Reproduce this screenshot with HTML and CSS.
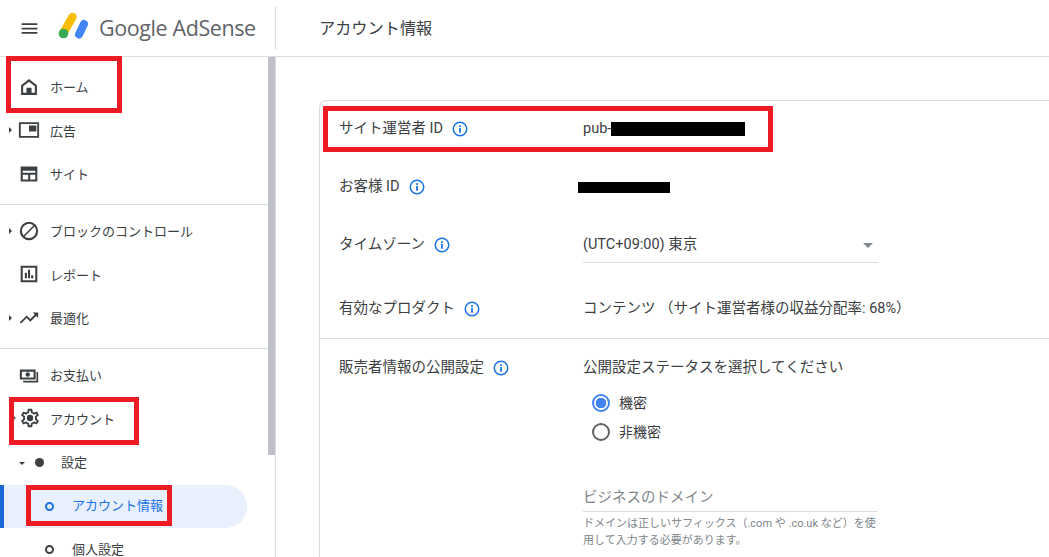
FILE: index.html
```html
<!DOCTYPE html>
<html lang="ja">
<head>
<meta charset="utf-8">
<title>アカウント情報</title>
<link rel="stylesheet" href="styles.css">
</head>
<body>
<header class="topbar">
  <div class="brand">
    <svg class="menu-icon" viewBox="0 0 24 24"><path d="M3 18h18v-2H3v2zm0-5h18v-2H3v2zm0-7v2h18V6H3z"/></svg>
    <svg class="logo" viewBox="0 0 32 28">
      <path d="M14.500 4 L5 20.500" stroke="#fbbc04" stroke-width="8.500" stroke-linecap="round" fill="none"/>
      <path d="M26 11 L21 21.500" stroke="#4285f4" stroke-width="8" stroke-linecap="round" fill="none"/>
      <circle cx="5.500" cy="20.500" r="4.800" fill="#34a853"/>
    </svg>
    <span class="logo-text">Google AdSense</span>
  </div>
  <h1 class="page-title">アカウント情報</h1>
</header>
<div class="body-row">
  <nav class="sidebar">
    <div class="nav-scroll">
      <div class="group first">
        <a class="item"><svg class="ico" viewBox="0 0 24 24"><path d="M12 2.500 2.500 10v11.500h19V10L12 2.500zM19 19h-4v-6H9v6H5v-7.900l7-5.400 7 5.400V19z"/><path d="M9.500 14h5v5.500h-5z"/></svg><span>ホーム</span></a>
        <a class="item"><span class="caret"></span><svg class="ico wide" viewBox="0 0 24 24"><path d="M1 3.500v17h22v-17H1zm20 15H3v-13h18v13zM12 7h8v6.500h-8z"/></svg><span>広告</span></a>
        <a class="item"><svg class="ico" viewBox="0 0 24 24"><path d="M2 3v18h20V3H2zm2.500 15.500V13H11v5.500H4.500zm9 0V13h6v5.500h-6zM4.500 10.500V8h15v2.500h-15z"/></svg><span>サイト</span></a>
      </div>
      <div class="group">
        <a class="item"><span class="caret"></span><svg class="ico big" viewBox="0 0 24 24"><path d="M12 2a10 10 0 1 0 0 20 10 10 0 0 0 0-20zM4.300 12a7.700 7.700 0 0 1 12.500-6L6 16.800A7.700 7.700 0 0 1 4.300 12zm7.700 7.700A7.700 7.700 0 0 1 7.200 18L18 7.200A7.700 7.700 0 0 1 12 19.700z"/></svg><span>ブロックのコントロール</span></a>
        <a class="item"><svg class="ico" viewBox="0 0 24 24"><path d="M2 2h20v20H2V2zm2.500 2.500v15h15v-15h-15zM7 10.500h2.500V17H7zm3.800-3.500h2.500v10h-2.500zm3.800 6.500h2.500V17h-2.500z"/></svg><span>レポート</span></a>
        <a class="item"><span class="caret"></span><svg class="ico big" viewBox="0 0 24 24"><path d="m16 6 2.300 2.300-4.900 4.900-4-4L2 16.600 3.400 18l6-6 4 4 6.300-6.300L22 12V6z"/></svg><span>最適化</span></a>
      </div>
      <div class="group last">
        <a class="item"><svg class="ico" viewBox="0 0 24 24"><path d="M1 5.500v12h19v-12H1zm2.500 2.500h14v7h-14V8z"/><circle cx="10.500" cy="11.500" r="2.700"/><path d="M21 8.500V19H5v2h18V8.500h-2z"/></svg><span>お支払い</span></a>
        <a class="item"><span class="caret tiny"></span><svg class="ico big gear" viewBox="0 0 24 24"><path d="M19.430 12.980c.04-.32.07-.64.07-.98 0-.34-.03-.66-.07-.98l2.110-1.650c.19-.15.24-.42.12-.64l-2-3.460c-.09-.16-.26-.25-.44-.25-.06 0-.12.01-.17.03l-2.490 1c-.52-.4-1.080-.73-1.690-.98l-.38-2.650C14.460 2.180 14.250 2 14 2h-4c-.25 0-.46.18-.49.42l-.38 2.650c-.61.25-1.170.59-1.690.98l-2.490-1c-.06-.02-.12-.03-.18-.03-.17 0-.34.09-.43.25l-2 3.460c-.13.22-.07.49.12.64l2.110 1.650c-.04.32-.07.65-.07.98 0 .33.03.66.07.98l-2.110 1.650c-.19.15-.24.42-.12.64l2 3.460c.09.16.26.25.44.25.06 0 .12-.01.17-.03l2.490-1c.52.4 1.080.73 1.690.98l.38 2.650c.03.24.24.42.49.42h4c.25 0 .46-.18.49-.42l.38-2.650c.61-.25 1.170-.59 1.690-.98l2.490 1c.06.02.12.03.18.03.17 0 .34-.09.43-.25l2-3.460c.12-.22.07-.49-.12-.64l-2.110-1.650zm-1.980-1.710c.04.31.05.52.05.73 0 .21-.02.43-.05.73l-.14 1.130.89.7 1.080.84-.7 1.210-1.270-.51-1.040-.42-.9.68c-.43.32-.84.56-1.250.73l-1.060.43-.16 1.130-.2 1.350h-1.400l-.19-1.350-.16-1.130-1.060-.43c-.43-.18-.83-.41-1.230-.71l-.91-.7-1.060.43-1.270.51-.7-1.210 1.080-.84.89-.7-.14-1.130c-.03-.31-.05-.54-.05-.74s.02-.43.05-.73l.14-1.130-.89-.7-1.080-.84.7-1.210 1.270.51 1.040.42.9-.68c.43-.32.84-.56 1.250-.73l1.060-.43.16-1.130.2-1.350h1.390l.19 1.350.16 1.130 1.060.43c.43.18.83.41 1.230.71l.91.7 1.060-.43 1.270-.51.7 1.210-1.070.85-.89.7.14 1.130z"/><circle cx="12" cy="12" r="3.500"/></svg><span>アカウント</span></a>
        <a class="item sub"><span class="caret down"></span><span class="dot"></span><span>設定</span></a>
        <a class="item leaf active"><span class="ring"></span><span>アカウント情報</span></a>
        <a class="item leaf"><span class="ring"></span><span>個人設定</span></a>
      </div>
    </div>
    <div class="scrollbar"><div class="thumb"></div></div>
  </nav>
  <main class="content">
    <section class="card">
      <div class="top-rows">
        <div class="row r1"><div class="label">サイト運営者 ID<svg class="info" viewBox="0 0 24 24"><use href="#info"/></svg></div><div class="value">pub-<span class="mask pub"></span></div></div>
        <div class="row r2"><div class="label">お客様 ID<svg class="info" viewBox="0 0 24 24"><use href="#info"/></svg></div><div class="value"><span class="mask cust"></span></div></div>
        <div class="row r3"><div class="label">タイムゾーン<svg class="info" viewBox="0 0 24 24"><use href="#info"/></svg></div><div class="value"><div class="select"><span>(UTC+09:00) 東京</span><span class="arrow"></span></div></div></div>
        <div class="row r4"><div class="label">有効なプロダクト<svg class="info" viewBox="0 0 24 24"><use href="#info"/></svg></div><div class="value">コンテンツ （サイト運営者様の収益分配率: 68%）</div></div>
      </div>
      <div class="row seller">
        <div class="label">販売者情報の公開設定<svg class="info" viewBox="0 0 24 24"><use href="#info"/></svg></div>
        <div class="value">
          <div class="prompt">公開設定ステータスを選択してください</div>
          <div class="radios">
            <div class="radio-row"><span class="radio on"></span>機密</div>
            <div class="radio-row"><span class="radio"></span>非機密</div>
          </div>
          <div class="field">
            <div class="placeholder">ビジネスのドメイン</div>
            <div class="hint">ドメインは正しいサフィックス（.com や .co.uk など）を使用して入力する必要があります。</div>
          </div>
        </div>
      </div>
    </section>
  </main>
</div>
<div class="mark m-home"></div>
<div class="mark m-account"></div>
<div class="mark m-info"></div>
<div class="mark m-pub"></div>
<svg class="defs" width="0" height="0"><defs><g id="info"><path fill="#1a73e8" d="M12 2a10 10 0 1 0 0 20 10 10 0 0 0 0-20zm0 18a8 8 0 1 1 0-16 8 8 0 0 1 0 16zm-1.200-9.500h2.400V17h-2.400zm0-3.500h2.400v2.300h-2.400z"/></g></defs></svg>
</body>
</html>
```
FILE: styles.css
```css
* { box-sizing: border-box; }
html, body { margin: 0; height: 100%; overflow: hidden; }
body { font-family: Roboto, "Noto Sans CJK JP", sans-serif; font-size: 13px; color: #3c4043; background: #fff; position: relative; }
.topbar { height: 57px; border-bottom: 1px solid #dadce0; display: flex; align-items: center; }
.brand { width: 276px; height: 44px; display: flex; align-items: center; border-right: 1px solid #dadce0; padding-left: 19px; }
.menu-icon { width: 21px; height: 21px; fill: #3c4043; flex: none; }
.logo { width: 32px; height: 28px; margin: 0 0 2px 18px; flex: none; overflow: visible; }
.logo-text { margin: 0 0 2px 9px; font-family: "Open Sans", sans-serif; font-size: 21.5px; letter-spacing: -.4px; color: #5f6368; white-space: nowrap; }
.page-title { margin: 0 0 3px 43px; font-size: 16.2px; font-weight: 400; color: #3c4043; }
.body-row { display: flex; height: 500px; }
.sidebar { width: 276px; flex: none; display: flex; border-right: 1px solid #dadce0; }
.nav-scroll { width: 268px; flex: none; }
.scrollbar { width: 7px; background: #fff; }
.thumb { height: 398px; background: #bdc1c6; }
.group { border-top: 1px solid #dadce0; padding: 3.75px 0 9px; }
.group.first { border-top: 0; padding: 8px 0 8.5px; }
.group.last { padding-top: 3.5px; }
.item { height: 43.5px; display: flex; align-items: center; position: relative; padding-left: 50px; white-space: nowrap; font-size: 13px; }
.caret { position: absolute; left: 9px; top: 50%; margin-top: -3px; width: 0; height: 0; border-top: 3px solid transparent; border-bottom: 3px solid transparent; border-left: 3px solid #3c4043; }
.caret.tiny { left: 14px; margin-top: -2px; border-top-width: 2px; border-bottom-width: 2px; border-left-width: 2px; border-left-color: #5f6368; }
.caret.down { left: 19px; margin-top: 0; border-left: 3px solid transparent; border-right: 3px solid transparent; border-top: 3px solid #3c4043; border-bottom: 0; }
.ico { position: absolute; left: 19px; top: 50%; margin-top: -10px; width: 20px; height: 20px; fill: #3c4043; }
.ico.wide { width: 22px; height: 22px; margin-top: -11px; left: 18px; }
.ico.big { width: 22px; height: 22px; margin-top: -11px; left: 18px; }
.ico.gear { left: 19px; }
.sub { padding-left: 61px; }
.dot { position: absolute; left: 35px; top: 50%; margin-top: -3.5px; width: 9px; height: 9px; border-radius: 50%; background: #3c4043; }
.leaf { padding-left: 72px; }
.ring { position: absolute; left: 45px; top: 50%; margin-top: -3.5px; width: 9px; height: 9px; border-radius: 50%; border: 2px solid #3c4043; }
.active { width: 247px; height: 43px; margin: 1.5px 0 -1px; padding: 0 0 3px 68px; color: #1a73e8; background: #e8f0fe; border-left: 4px solid #1967d2; border-radius: 0 22px 22px 0; }
.active .ring { left: 41px; margin-top: -4.5px; border-color: #1a73e8; }
.content { flex: 1; padding: 43px 0 0 43px; min-width: 0; }
.card { width: 730px; height: 600px; border: 1px solid #dadce0; border-radius: 8px 0 0 0; border-right: 0; padding-left: 19px; }
.top-rows { margin-left: -19px; padding-left: 19px; border-bottom: 1px solid #dadce0; height: 238px; }
.row { display: flex; }
.label { width: 244px; flex: none; display: flex; align-items: center; align-self: flex-start; gap: 8px; font-size: 14.5px; color: #3c4043; white-space: nowrap; line-height: 20px; }
.value { font-size: 14.5px; line-height: 20px; white-space: nowrap; }
.r1 { padding-top: 18px; }
.r2 { padding-top: 38px; }
.r3 { padding-top: 38px; }
.r4 { padding-top: 36px; }
.info { width: 18px; height: 18px; flex: none; }
.mask { display: inline-block; background: #000; vertical-align: middle; }
.pub { width: 134px; height: 14px; }
.cust { width: 92px; height: 11px; margin-left: -5px; }
.select { width: 295px; height: 28px; border-bottom: 1px solid #dadce0; display: flex; justify-content: space-between; align-items: flex-start; padding-right: 5px; }
.arrow { margin-top: 8px; width: 0; height: 0; border-left: 5px solid transparent; border-right: 5px solid transparent; border-top: 5px solid #80868b; }
.seller { padding-top: 19px; }
.radios { margin: 10px 0 0 9px; }
.radio-row { display: flex; align-items: center; gap: 9px; height: 29.5px; font-size: 14px; }
.radio { width: 18px; height: 18px; border-radius: 50%; border: 2px solid #5f6368; flex: none; }
.radio.on { border-color: #4285f4; background: radial-gradient(circle, #4285f4 0 5px, #fff 5.500px); }
.field { margin-top: 41px; width: 295px; }
.placeholder { font-size: 14.5px; color: #80868b; height: 24px; border-bottom: 1px solid #dadce0; }
.hint { margin-top: 3px; font-size: 11px; line-height: 17px; color: #80868b; white-space: normal; }
.mark { position: absolute; border: 5px solid #ed1c24; }
.m-home { left: 6px; top: 56px; width: 116px; height: 57px; }
.m-account { left: 9px; top: 397px; width: 130px; height: 48px; }
.m-info { left: 26px; top: 485px; width: 146px; height: 41px; }
.m-pub { left: 323px; top: 106px; width: 450px; height: 46px; }
.defs { position: absolute; }
```
